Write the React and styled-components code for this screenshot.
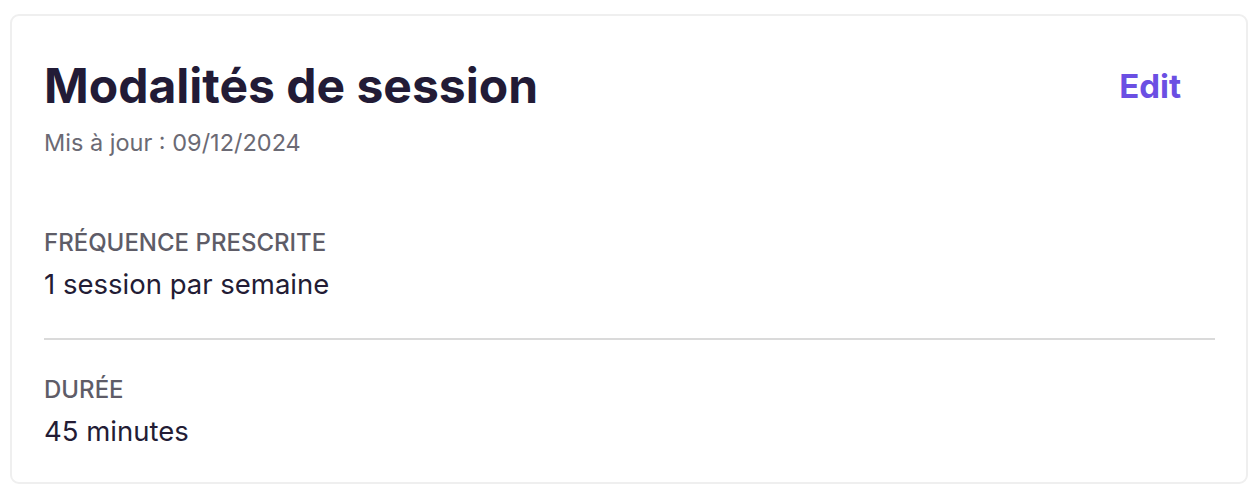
import styled, { createGlobalStyle } from "styled-components";

const Global = createGlobalStyle`
  body {
    margin: 0;
    background: #ffffff;
    font-family: Inter, "Noto Sans", sans-serif;
  }
`;

const Page = styled.div`
  padding: 14px 10px;
`;

const Card = styled.section`
  border: 2px solid #efefef;
  border-radius: 9px;
  padding: 41px 31px 34px 32px;
  background: #fff;
`;

const Header = styled.div`
  display: flex;
  justify-content: space-between;
  align-items: flex-start;
`;

const Title = styled.h1`
  margin: 0;
  font-size: 48px;
  line-height: 58px;
  font-weight: 700;
  color: #221b36;
`;

const EditButton = styled.button`
  border: none;
  background: none;
  padding: 0;
  margin: 9px 34px 0 0;
  font-family: inherit;
  font-size: 33px;
  line-height: 40px;
  font-weight: 700;
  color: #6b4fe3;
  cursor: pointer;
`;

const Updated = styled.p`
  margin: 13px 0 0;
  font-size: 23.5px;
  line-height: 30px;
  color: #6b6a74;
`;

const Fields = styled.div`
  margin-top: 70px;
  display: flex;
  flex-direction: column;
`;

const Field = styled.div`
  padding: ${(p) => (p.$first ? "0 0 37px" : "35px 0 0")};
  border-top: ${(p) => (p.$first ? "none" : "2px solid #dadada")};
`;

const Label = styled.div`
  font-size: 24px;
  line-height: 30px;
  font-weight: 500;
  color: #5e5c67;
  text-transform: uppercase;
`;

const Value = styled.div`
  margin-top: 9px;
  font-size: 27.5px;
  line-height: 34px;
  color: #231c35;
`;

const fields = [
  { label: "Fréquence prescrite", value: "1 session par semaine" },
  { label: "Durée", value: "45 minutes" },
];

const App = () => {
  return (
    <Page>
      <Global />
      <Card>
        <Header>
          <Title>Modalités de session</Title>
          <EditButton>Edit</EditButton>
        </Header>
        <Updated>Mis à jour : 09/12/2024</Updated>
        <Fields>
          {fields.map((f, i) => (
            <Field key={f.label} $first={i === 0}>
              <Label>{f.label}</Label>
              <Value>{f.value}</Value>
            </Field>
          ))}
        </Fields>
      </Card>
    </Page>
  );
};

export default App;
